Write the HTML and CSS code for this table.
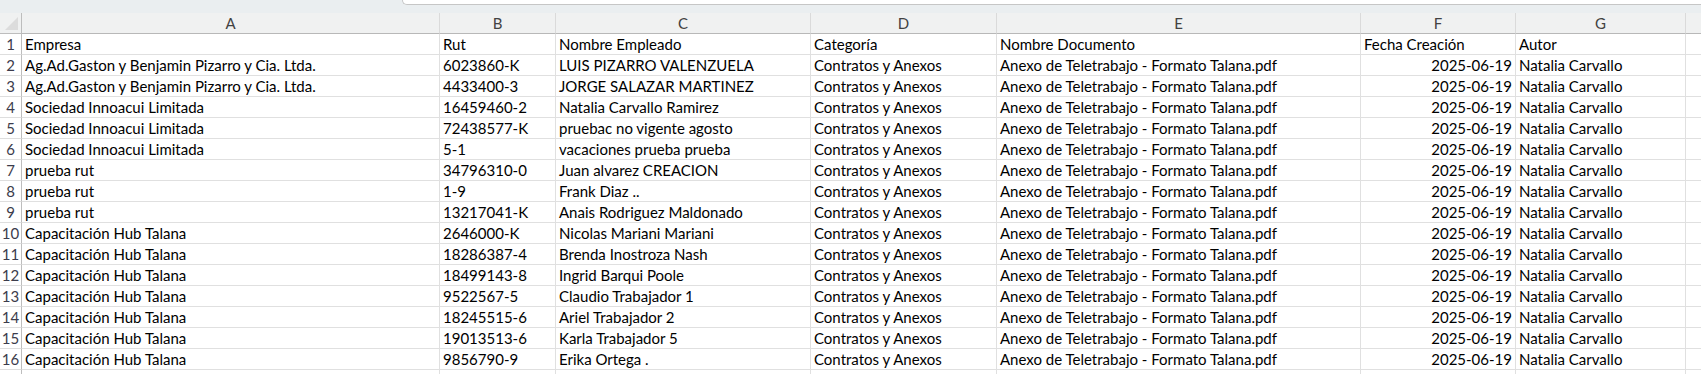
FILE: index.html
```html
<!DOCTYPE html>
<html lang="es">
<head>
<meta charset="utf-8">
<title>Hoja de cálculo</title>
<link rel="stylesheet" href="styles.css">
</head>
<body>
<div class="app">
  <div class="topband"><div class="formula-box"></div></div>
  <div class="sheet">
    <div class="corner"><span class="tri"></span></div>
    <div class="colhdr">A</div><div class="colhdr">B</div><div class="colhdr">C</div><div class="colhdr">D</div><div class="colhdr">E</div><div class="colhdr">F</div><div class="colhdr">G</div><div class="colhdr"></div>

    <div class="rowhdr">1</div><div class="c">Empresa</div><div class="c">Rut</div><div class="c">Nombre Empleado</div><div class="c">Categoría</div><div class="c">Nombre Documento</div><div class="c">Fecha Creación</div><div class="c">Autor</div><div class="c"></div>

    <div class="rowhdr">2</div><div class="c">Ag.Ad.Gaston y Benjamin Pizarro y Cia. Ltda.</div><div class="c">6023860-K</div><div class="c">LUIS PIZARRO VALENZUELA</div><div class="c">Contratos y Anexos</div><div class="c">Anexo de Teletrabajo - Formato Talana.pdf</div><div class="c r">2025-06-19</div><div class="c">Natalia Carvallo</div><div class="c"></div>

    <div class="rowhdr">3</div><div class="c">Ag.Ad.Gaston y Benjamin Pizarro y Cia. Ltda.</div><div class="c">4433400-3</div><div class="c">JORGE SALAZAR MARTINEZ</div><div class="c">Contratos y Anexos</div><div class="c">Anexo de Teletrabajo - Formato Talana.pdf</div><div class="c r">2025-06-19</div><div class="c">Natalia Carvallo</div><div class="c"></div>

    <div class="rowhdr">4</div><div class="c">Sociedad Innoacui Limitada</div><div class="c">16459460-2</div><div class="c">Natalia Carvallo Ramirez</div><div class="c">Contratos y Anexos</div><div class="c">Anexo de Teletrabajo - Formato Talana.pdf</div><div class="c r">2025-06-19</div><div class="c">Natalia Carvallo</div><div class="c"></div>

    <div class="rowhdr">5</div><div class="c">Sociedad Innoacui Limitada</div><div class="c">72438577-K</div><div class="c">pruebac no vigente agosto</div><div class="c">Contratos y Anexos</div><div class="c">Anexo de Teletrabajo - Formato Talana.pdf</div><div class="c r">2025-06-19</div><div class="c">Natalia Carvallo</div><div class="c"></div>

    <div class="rowhdr">6</div><div class="c">Sociedad Innoacui Limitada</div><div class="c">5-1</div><div class="c">vacaciones prueba prueba</div><div class="c">Contratos y Anexos</div><div class="c">Anexo de Teletrabajo - Formato Talana.pdf</div><div class="c r">2025-06-19</div><div class="c">Natalia Carvallo</div><div class="c"></div>

    <div class="rowhdr">7</div><div class="c">prueba rut</div><div class="c">34796310-0</div><div class="c">Juan alvarez CREACION</div><div class="c">Contratos y Anexos</div><div class="c">Anexo de Teletrabajo - Formato Talana.pdf</div><div class="c r">2025-06-19</div><div class="c">Natalia Carvallo</div><div class="c"></div>

    <div class="rowhdr">8</div><div class="c">prueba rut</div><div class="c">1-9</div><div class="c">Frank Diaz ..</div><div class="c">Contratos y Anexos</div><div class="c">Anexo de Teletrabajo - Formato Talana.pdf</div><div class="c r">2025-06-19</div><div class="c">Natalia Carvallo</div><div class="c"></div>

    <div class="rowhdr">9</div><div class="c">prueba rut</div><div class="c">13217041-K</div><div class="c">Anais Rodriguez Maldonado</div><div class="c">Contratos y Anexos</div><div class="c">Anexo de Teletrabajo - Formato Talana.pdf</div><div class="c r">2025-06-19</div><div class="c">Natalia Carvallo</div><div class="c"></div>

    <div class="rowhdr">10</div><div class="c">Capacitación Hub Talana</div><div class="c">2646000-K</div><div class="c">Nicolas Mariani Mariani</div><div class="c">Contratos y Anexos</div><div class="c">Anexo de Teletrabajo - Formato Talana.pdf</div><div class="c r">2025-06-19</div><div class="c">Natalia Carvallo</div><div class="c"></div>

    <div class="rowhdr">11</div><div class="c">Capacitación Hub Talana</div><div class="c">18286387-4</div><div class="c">Brenda Inostroza Nash</div><div class="c">Contratos y Anexos</div><div class="c">Anexo de Teletrabajo - Formato Talana.pdf</div><div class="c r">2025-06-19</div><div class="c">Natalia Carvallo</div><div class="c"></div>

    <div class="rowhdr">12</div><div class="c">Capacitación Hub Talana</div><div class="c">18499143-8</div><div class="c">Ingrid Barqui Poole</div><div class="c">Contratos y Anexos</div><div class="c">Anexo de Teletrabajo - Formato Talana.pdf</div><div class="c r">2025-06-19</div><div class="c">Natalia Carvallo</div><div class="c"></div>

    <div class="rowhdr">13</div><div class="c">Capacitación Hub Talana</div><div class="c">9522567-5</div><div class="c">Claudio Trabajador 1</div><div class="c">Contratos y Anexos</div><div class="c">Anexo de Teletrabajo - Formato Talana.pdf</div><div class="c r">2025-06-19</div><div class="c">Natalia Carvallo</div><div class="c"></div>

    <div class="rowhdr">14</div><div class="c">Capacitación Hub Talana</div><div class="c">18245515-6</div><div class="c">Ariel Trabajador 2</div><div class="c">Contratos y Anexos</div><div class="c">Anexo de Teletrabajo - Formato Talana.pdf</div><div class="c r">2025-06-19</div><div class="c">Natalia Carvallo</div><div class="c"></div>

    <div class="rowhdr">15</div><div class="c">Capacitación Hub Talana</div><div class="c">19013513-6</div><div class="c">Karla Trabajador 5</div><div class="c">Contratos y Anexos</div><div class="c">Anexo de Teletrabajo - Formato Talana.pdf</div><div class="c r">2025-06-19</div><div class="c">Natalia Carvallo</div><div class="c"></div>

    <div class="rowhdr">16</div><div class="c">Capacitación Hub Talana</div><div class="c">9856790-9</div><div class="c">Erika Ortega .</div><div class="c">Contratos y Anexos</div><div class="c">Anexo de Teletrabajo - Formato Talana.pdf</div><div class="c r">2025-06-19</div><div class="c">Natalia Carvallo</div><div class="c"></div>

    <div class="rowhdr"></div><div class="c"></div><div class="c"></div><div class="c"></div><div class="c"></div><div class="c"></div><div class="c"></div><div class="c"></div><div class="c"></div>
  </div>
</div>
</body>
</html>
```

FILE: styles.css
```css
* { box-sizing: border-box; }
html, body {
  margin: 0;
  padding: 0;
  background: #ffffff;
  overflow: hidden;
}
.app {
  width: 1701px;
  height: 374px;
  overflow: hidden;
  font-family: Lato, "Open Sans", sans-serif;
  font-size: 15px;
  color: #000;
}
.topband {
  height: 13px;
  background: #eaeef0;
  padding-left: 402px;
}
.formula-box {
  height: 5px;
  background: #ffffff;
  border-left: 1px solid #c6c6c6;
  border-bottom: 1px solid #c6c6c6;
  border-bottom-left-radius: 6px;
}
.sheet {
  display: grid;
  grid-template-columns: 22px 418px 116px 255px 186px 364px 155px 170px 40px;
  grid-auto-rows: 21px;
  grid-template-rows: 21px;
}
.corner {
  position: relative;
  background: #f0f1f1;
  border-right: 1px solid #bdbdbd;
  border-bottom: 1px solid #bdbdbd;
}
.tri {
  position: absolute;
  right: 3px;
  bottom: 3px;
  width: 0;
  height: 0;
  border-left: 13px solid transparent;
  border-bottom: 13px solid #dcdcdc;
}
.colhdr {
  background: #f0f1f1;
  border-right: 1px solid #dadada;
  border-bottom: 1px solid #b8b8b8;
  text-align: center;
  color: #424242;
  line-height: 20px;
  font-size: 15px;
}
.rowhdr {
  background: #ffffff;
  border-right: 1px solid #bdbdbd;
  border-bottom: 1px solid #dedede;
  color: #3c3c4c;
  text-align: center;
  line-height: 20px;
  font-size: 15px;
}
.c {
  border-right: 1px solid #e0e0e0;
  border-bottom: 1px solid #e0e0e0;
  padding: 0 3px;
  line-height: 20px;
  white-space: nowrap;
  overflow: hidden;
}
.c.r { text-align: right; }
```
